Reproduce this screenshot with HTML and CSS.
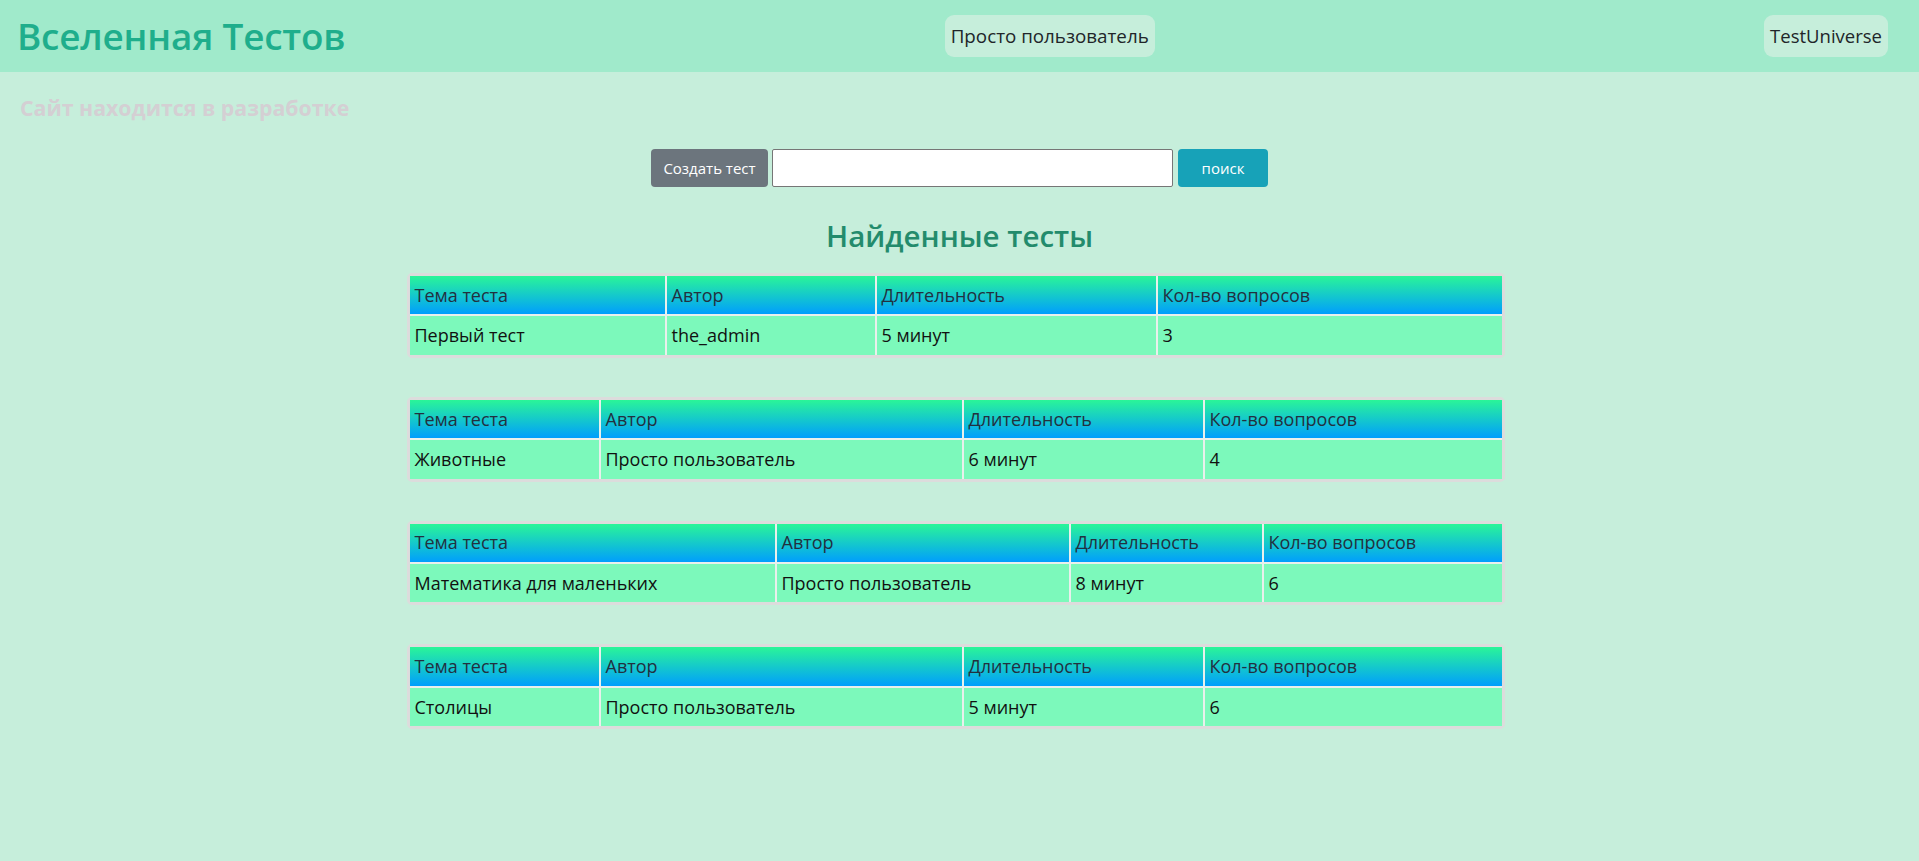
FILE: index.html
```html
<!DOCTYPE html>
<html lang="ru">
<head>
<meta charset="utf-8">
<title>Вселенная Тестов</title>
<link rel="stylesheet" href="styles.css">
</head>
<body>
<header class="topbar">
  <h1 class="brand">Вселенная Тестов</h1>
  <a class="pill pill-user" href="#">Просто пользователь</a>
  <a class="pill" href="#">TestUniverse</a>
</header>

<p class="notice">Сайт находится в разработке</p>

<form class="search">
  <button type="button" class="btn btn-create">Создать тест</button>
  <input class="search-input" type="text">
  <button type="button" class="btn btn-search">поиск</button>
</form>

<h2 class="found">Найденные тесты</h2>

<main class="tables">
  <table class="tests t1">
    <tr><th class="a">Тема теста</th><th class="b">Автор</th><th class="c">Длительность</th><th>Кол-во вопросов</th></tr>
    <tr><td>Первый тест</td><td>the_admin</td><td>5 минут</td><td>3</td></tr>
  </table>
  <table class="tests t2">
    <tr><th class="a">Тема теста</th><th class="b">Автор</th><th class="c">Длительность</th><th>Кол-во вопросов</th></tr>
    <tr><td>Животные</td><td>Просто пользователь</td><td>6 минут</td><td>4</td></tr>
  </table>
  <table class="tests t3">
    <tr><th class="a">Тема теста</th><th class="b">Автор</th><th class="c">Длительность</th><th>Кол-во вопросов</th></tr>
    <tr><td>Математика для маленьких</td><td>Просто пользователь</td><td>8 минут</td><td>6</td></tr>
  </table>
  <table class="tests t2">
    <tr><th class="a">Тема теста</th><th class="b">Автор</th><th class="c">Длительность</th><th>Кол-во вопросов</th></tr>
    <tr><td>Столицы</td><td>Просто пользователь</td><td>5 минут</td><td>6</td></tr>
  </table>
</main>
</body>
</html>
```
FILE: styles.css
```css
* { box-sizing: border-box; }

html, body {
  margin: 0;
  padding: 0;
}

body {
  background: #c6eedb;
  font-family: "Open Sans", "Noto Sans", sans-serif;
  color: #212529;
  min-height: 861px;
}

.topbar {
  height: 72px;
  background: #a0eacb;
  display: flex;
  align-items: center;
  justify-content: space-between;
  padding: 0 31px 0 17px;
}

.brand {
  margin: 0;
  font-size: 36.9px;
  font-weight: 600;
  line-height: 1.2;
  color: #1fae8c;
  letter-spacing: -0.2px;
}

.pill {
  display: block;
  background: #c6eedb;
  color: #212529;
  text-decoration: none;
  font-size: 18.5px;
  line-height: 30px;
  padding: 6px 6px;
  border-radius: 9px;
}

.pill-user {
  font-size: 18.8px;
  margin-right: 10px;
}

.notice {
  margin: 22px 0 0 20px;
  font-size: 21.3px;
  font-weight: 700;
  line-height: 28px;
  color: #d4cfd3;
}

.search {
  display: flex;
  justify-content: center;
  gap: 4px;
  margin-top: 27px;
  height: 38px;
}

.btn {
  border: none;
  border-radius: 4px;
  color: #fff;
  font-family: inherit;
  font-size: 15px;
  height: 38px;
  cursor: pointer;
}

.btn-create {
  background: #6c757d;
  width: 117px;
  padding: 0;
}

.search-input {
  width: 401px;
  height: 38px;
  border: 1px solid #767676;
  background: #fff;
  border-radius: 2px;
  margin: 0;
}

.btn-search {
  background: #17a2b8;
  width: 90px;
  padding: 0;
  margin-left: 1px;
}

.found {
  text-align: center;
  margin: 30px 0 0;
  font-size: 29.5px;
  font-weight: 600;
  line-height: 38px;
  color: #238b6c;
}

.tables {
  display: flex;
  flex-direction: column;
  align-items: center;
  padding-right: 8px;
  margin-top: 18px;
  gap: 39px;
}

.tests {
  width: 1098px;
  table-layout: fixed;
  border-collapse: separate;
  border-spacing: 0;
  border: 3px solid #dcdcdc;
  border-radius: 5px;
  font-size: 18px;
  line-height: 28.8px;
}

.tests th,
.tests td {
  padding: 4.8px 5px;
  text-align: left;
  font-weight: 400;
  white-space: nowrap;
  border-right: 2px solid #e9f0ec;
}

.tests th:last-child,
.tests td:last-child {
  border-right: none;
}

.tests th {
  background: linear-gradient(to bottom, #2af598, #009efd);
  color: #22303f;
  border-bottom: 2px solid #e9f0ec;
}

.tests td {
  background: #7cf9bb;
  color: #111;
}

.t1 .a { width: 257px; }
.t1 .b { width: 210px; }
.t1 .c { width: 281px; }

.t2 .a { width: 191px; }
.t2 .b { width: 363px; }
.t2 .c { width: 241px; }

.t3 .a { width: 367px; }
.t3 .b { width: 294px; }
.t3 .c { width: 193px; }
```
